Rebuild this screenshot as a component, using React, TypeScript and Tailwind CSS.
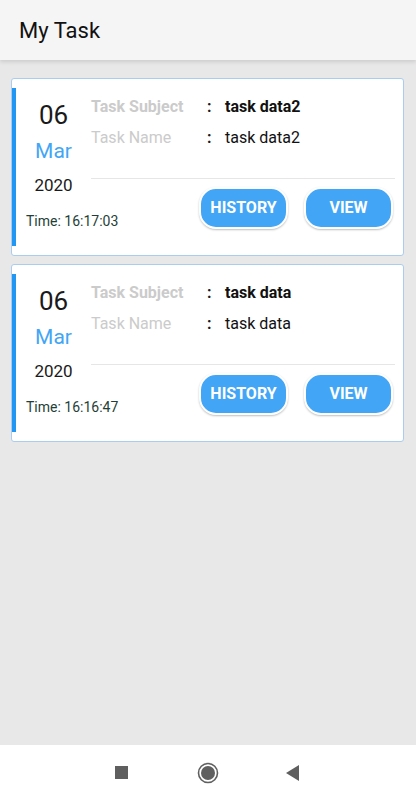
import React from 'react';

type Task = {
  day: string;
  month: string;
  year: string;
  time: string;
  subject: string;
  name: string;
};

const tasks: Task[] = [
  { day: '06', month: 'Mar', year: '2020', time: '16:17:03', subject: 'task data2', name: 'task data2' },
  { day: '06', month: 'Mar', year: '2020', time: '16:16:47', subject: 'task data', name: 'task data' },
];

function TaskCard({ task }: { task: Task }) {
  return (
    <div className="flex h-[178px] rounded-[3px] border border-[#a9cdee] bg-white">
      {/* accent bar */}
      <div className="my-[9px] w-[4px] shrink-0 bg-[#2196f3]" />

      {/* date column */}
      <div className="flex w-[75px] shrink-0 flex-col items-center pt-[21px]">
        <div className="text-[26px] leading-[30px] text-[#1a1a1a]">{task.day}</div>
        <div className="mt-[8px] text-[21px] leading-[26px] text-[#42a5f5]">{task.month}</div>
        <div className="mt-[10px] text-[17px] leading-[22px] text-[#1a1a1a]">{task.year}</div>
        <div className="mt-[17px] self-start whitespace-nowrap pl-[10px] text-[14px] leading-[16px] text-[#1f3f38]">
          Time: {task.time}
        </div>
      </div>

      {/* details */}
      <div className="flex flex-1 flex-col pr-[8px] pt-[17px]">
        <div className="flex text-[16px] leading-[22px]">
          <span className="w-[116px] font-bold text-[#cbcbcb]">Task Subject</span>
          <span className="w-[18px] font-bold text-[#1a1a1a]">:</span>
          <span className="font-bold text-[#111]">{task.subject}</span>
        </div>
        <div className="mt-[9px] flex text-[16px] leading-[22px]">
          <span className="w-[116px] text-[#cbcbcb]">Task Name</span>
          <span className="w-[18px] font-bold text-[#1a1a1a]">:</span>
          <span className="text-[#111]">{task.name}</span>
        </div>
        <div className="mt-[29px] h-px bg-[#e6e6e6]" />
        <div className="mt-[8px] flex justify-end gap-[16px] pr-[2px]">
          <button className="h-[42px] w-[89px] rounded-[17px] border-2 border-white bg-[#42a5f5] text-[16px] font-bold text-white shadow-[0_1px_2px_rgba(0,0,0,0.25)]">
            HISTORY
          </button>
          <button className="h-[42px] w-[89px] rounded-[17px] border-2 border-white bg-[#42a5f5] text-[16px] font-bold text-white shadow-[0_1px_2px_rgba(0,0,0,0.25)]">
            VIEW
          </button>
        </div>
      </div>
    </div>
  );
}

export default function App() {
  return (
    <div className="flex h-[800px] w-[416px] flex-col bg-[#e8e8e8] font-['Roboto',sans-serif]">
      {/* App bar */}
      <div className="relative z-10 flex h-[60px] shrink-0 items-center bg-[#f5f5f5] pl-[19px] shadow-[0_2px_4px_rgba(0,0,0,0.12)]">
        <h1 className="text-[22px] text-[#111]">My Task</h1>
      </div>

      {/* Task list */}
      <div className="flex flex-1 flex-col gap-[8px] pl-[11px] pr-[12px] pt-[18px]">
        {tasks.map((t, i) => (
          <TaskCard key={i} task={t} />
        ))}
      </div>

      {/* System nav bar */}
      <div className="flex h-[55px] shrink-0 items-center bg-white pl-[115px]">
        <div className="h-[13px] w-[13px] bg-[#5f5f5f]" />
        <svg className="ml-[69px]" width="22" height="22" viewBox="0 0 22 22">
          <circle cx="11" cy="11" r="9.5" fill="none" stroke="#5f5f5f" strokeWidth="1.6" />
          <circle cx="11" cy="11" r="7" fill="#5f5f5f" />
        </svg>
        <svg className="ml-[67px]" width="13" height="16" viewBox="0 0 13 16">
          <path d="M13 0 L13 16 L0 8 Z" fill="#5f5f5f" />
        </svg>
      </div>
    </div>
  );
}
